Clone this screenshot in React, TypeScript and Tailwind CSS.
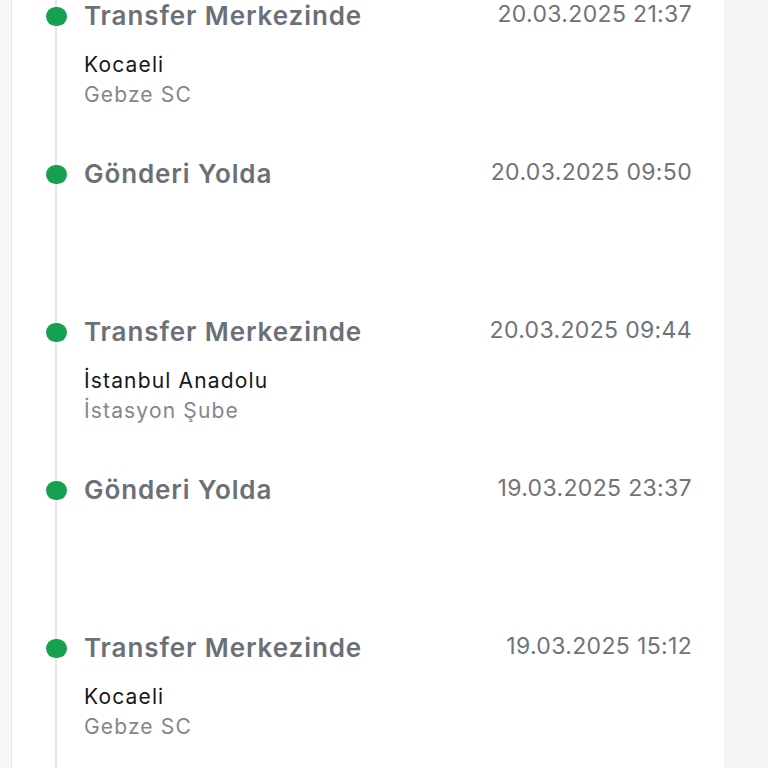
const events = [
  { title: "Transfer Merkezinde", date: "20.03.2025 21:37", city: "Kocaeli", branch: "Gebze SC" },
  { title: "Gönderi Yolda", date: "20.03.2025 09:50" },
  { title: "Transfer Merkezinde", date: "20.03.2025 09:44", city: "İstanbul Anadolu", branch: "İstasyon Şube" },
  { title: "Gönderi Yolda", date: "19.03.2025 23:37" },
  { title: "Transfer Merkezinde", date: "19.03.2025 15:12", city: "Kocaeli", branch: "Gebze SC" },
];

export default function App() {
  return (
    <div
      className="flex h-[768px] w-[768px] overflow-hidden bg-[#f3f4f6]"
      style={{ fontFamily: "Inter, 'Noto Sans', sans-serif" }}
    >
      <div className="w-[12px] shrink-0 border-r border-[#e8e9eb] bg-[#f6f7f8]" />
      <div className="relative w-[712px] shrink-0 bg-white">
        <div className="absolute bottom-0 left-[43px] top-0 w-[2px] bg-[#e6e7e9]" />
        <ul className="relative">
          {events.map((e, i) => (
            <li key={i} className="flex h-[158px] items-start pl-[34px] pr-[32px]">
              <span className="mt-[7px] h-[19px] w-[21px] shrink-0 rounded-full bg-[#16a150]" />
              <div className="ml-[17px] flex-1">
                <div className="text-[26px] font-semibold leading-[32px] tracking-[0.035em] text-[#6b7078]">
                  {e.title}
                </div>
                {e.city && (
                  <div className="mt-[18px] text-[21px] leading-[30px] tracking-[0.055em]">
                    <div className="text-[#15171b]">{e.city}</div>
                    <div className="text-[#83878d]">{e.branch}</div>
                  </div>
                )}
              </div>
              <div className="text-[23px] leading-[28px] tracking-[0.015em] text-[#6f737a]">{e.date}</div>
            </li>
          ))}
        </ul>
      </div>
    </div>
  );
}
